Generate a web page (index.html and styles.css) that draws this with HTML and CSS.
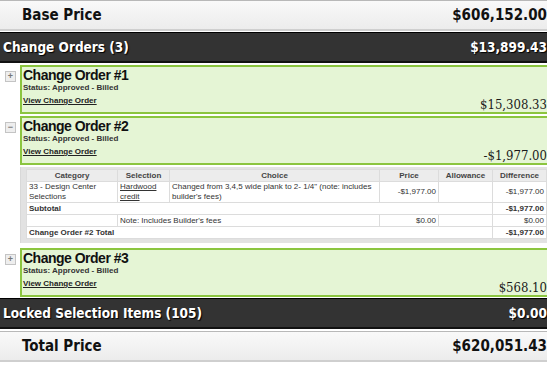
FILE: index.html
```html
<!DOCTYPE html>
<html lang="en">
<head>
    <meta charset="UTF-8">
    <title>Price Summary</title>
    <link rel="stylesheet" href="styles.css">
</head>
<body>
    <div class="page">
        <div class="price-row">
            <span class="price-label">Base Price</span>
            <span class="price-amount">$606,152.00</span>
        </div>
        <div class="section-bar">
            <span>Change Orders (3)</span>
            <span>$13,899.43</span>
        </div>

        <div class="co">
            <span class="toggle">+</span>
            <div class="co-box">
                <div class="co-info">
                    <div class="co-title">Change Order #1</div>
                    <div class="co-status">Status: Approved - Billed</div>
                    <a href="#" class="co-link">View Change Order</a>
                </div>
                <div class="co-amount">$15,308.33</div>
            </div>
        </div>

        <div class="co">
            <span class="toggle">&minus;</span>
            <div class="co-box">
                <div class="co-info">
                    <div class="co-title">Change Order #2</div>
                    <div class="co-status">Status: Approved - Billed</div>
                    <a href="#" class="co-link">View Change Order</a>
                </div>
                <div class="co-amount">-$1,977.00</div>
            </div>
        </div>
        <div class="co-detail">
            <table class="items">
                <colgroup>
                    <col style="width: 91px">
                    <col style="width: 52px">
                    <col style="width: 210px">
                    <col style="width: 59px">
                    <col style="width: 54px">
                    <col>
                </colgroup>
                <tr class="head">
                    <th>Category</th>
                    <th>Selection</th>
                    <th>Choice</th>
                    <th>Price</th>
                    <th>Allowance</th>
                    <th>Difference</th>
                </tr>
                <tr class="item">
                    <td>33 - Design Center Selections</td>
                    <td><a href="#">Hardwood credit</a></td>
                    <td>Changed from 3,4,5 wide plank to 2- 1/4" (note: includes builder's fees)</td>
                    <td class="num">-$1,977.00</td>
                    <td></td>
                    <td class="num">-$1,977.00</td>
                </tr>
                <tr>
                    <td colspan="5" class="bold">Subtotal</td>
                    <td class="num bold">-$1,977.00</td>
                </tr>
                <tr>
                    <td></td>
                    <td colspan="2">Note: Includes Builder's fees</td>
                    <td class="num">$0.00</td>
                    <td></td>
                    <td class="num">$0.00</td>
                </tr>
                <tr>
                    <td colspan="5" class="bold">Change Order #2 Total</td>
                    <td class="num bold">-$1,977.00</td>
                </tr>
            </table>
        </div>

        <div class="co co-last">
            <span class="toggle">+</span>
            <div class="co-box">
                <div class="co-info">
                    <div class="co-title">Change Order #3</div>
                    <div class="co-status">Status: Approved - Billed</div>
                    <a href="#" class="co-link">View Change Order</a>
                </div>
                <div class="co-amount">$568.10</div>
            </div>
        </div>

        <div class="section-bar">
            <span>Locked Selection Items (105)</span>
            <span>$0.00</span>
        </div>
        <div class="price-row">
            <span class="price-label">Total Price</span>
            <span class="price-amount">$620,051.43</span>
        </div>
    </div>
</body>
</html>
```

FILE: styles.css
```css
body {
    margin: 0;
    overflow: hidden;
    background-color: white;
    font-family: "DejaVu Sans Condensed", "DejaVu Sans", Verdana, sans-serif;
    font-stretch: condensed;
}
.price-row {
    display: flex;
    justify-content: space-between;
    align-items: center;
    height: 28px;
    padding-left: 22px;
    border-top: 1px solid #b8b8b8;
    border-bottom: 2px solid #cfcfcf;
    background: linear-gradient(#f9f9f9, #ececec);
    font-size: 15px;
    font-weight: bold;
    color: #111;
}
.section-bar + .price-row {
    margin-top: 2px;
}
.section-bar {
    display: flex;
    justify-content: space-between;
    align-items: center;
    height: 28px;
    margin-top: 1px;
    padding-left: 3px;
    border-top: 1px solid #000;
    border-bottom: 2px solid #111;
    background-color: #333;
    color: white;
    font-size: 13.5px;
    font-weight: bold;
    text-shadow: 1px 1px 1px #000;
}
.co {
    display: flex;
    margin-top: 2px;
}
.co-last {
    margin-top: 5px;
    margin-bottom: 1px;
}
.toggle {
    width: 9px;
    height: 9px;
    margin: 6px 4px 0 5px;
    border: 1px solid #c4c4c4;
    background-color: #eee;
    color: #777;
    font-family: "Liberation Sans", Arial, sans-serif;
    font-size: 9px;
    line-height: 9px;
    text-align: center;
    font-weight: bold;
}
.co-box {
    flex: 1;
    display: flex;
    justify-content: space-between;
    height: 45px;
    padding-left: 1px;
    border: 2px solid #8bc53f;
    border-right: none;
    background-color: #e5f5d5;
}
.co-title {
    margin-top: 1px;
    font-family: "Liberation Sans", Arial, sans-serif;
    font-size: 14px;
    font-weight: bold;
    letter-spacing: -0.5px;
    line-height: 15px;
    color: #111;
}
.co-status {
    font-family: "Liberation Sans", Arial, sans-serif;
    font-size: 8px;
    font-weight: bold;
    line-height: 9px;
    color: #333;
}
.co-link {
    display: block;
    margin-top: 4px;
    font-family: "Liberation Sans", Arial, sans-serif;
    font-size: 8px;
    font-weight: bold;
    color: #222;
}
.co-amount {
    align-self: flex-end;
    font-family: "DejaVu Serif Condensed", "DejaVu Serif", Georgia, serif;
    font-size: 13px;
    line-height: 15px;
    color: #1a1a1a;
}
.co-detail {
    margin: 2px 0 0 20px;
    padding: 2px 0 4px 5px;
    border-left: 1px solid #d8d8d8;
    background-color: #e2e2e2;
}
.items {
    width: 100%;
    border-collapse: collapse;
    table-layout: fixed;
    background-color: white;
    font-family: "Liberation Sans", Arial, sans-serif;
    font-size: 8px;
    line-height: 10px;
    color: #333;
}
.items tr {
    height: 12px;
}
.items th, .items td {
    padding: 0 2px;
    border: 1px solid #dcdcdc;
    vertical-align: middle;
}
.items th {
    background-color: #ececec;
    font-weight: bold;
    color: #444;
}
.items a {
    color: #333;
}
.items .num {
    text-align: right;
}
.items .bold {
    font-weight: bold;
}
```
